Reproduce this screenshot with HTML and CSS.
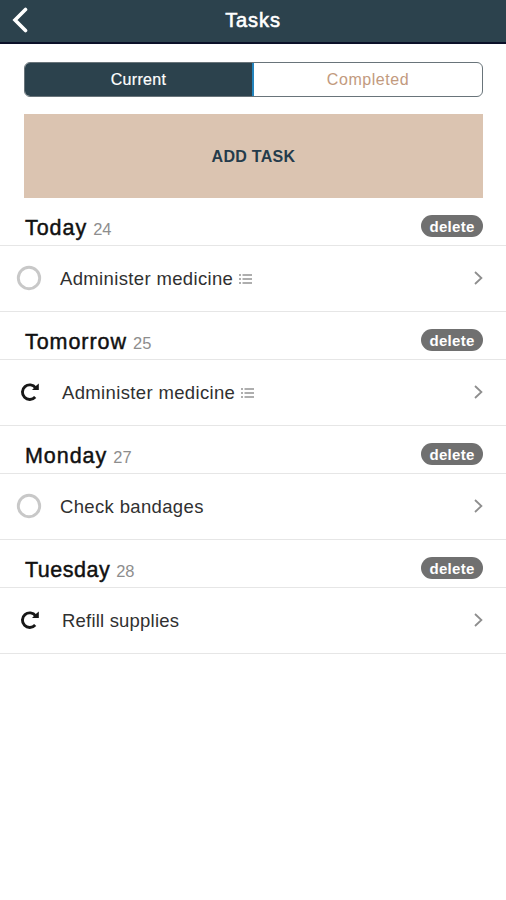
FILE: index.html
```html
<!DOCTYPE html>
<html lang="en">
<head>
<meta charset="utf-8">
<title>Tasks</title>
<link rel="stylesheet" href="styles.css">
</head>
<body>
<svg class="symbols" aria-hidden="true">
  <symbol id="chevron" viewBox="0 0 10 16"><path d="M1 2 7.4 8 1 14" fill="none" stroke="#8e8e8e" stroke-width="1.8"/></symbol>
  <symbol id="circle" viewBox="0 0 26 26"><circle cx="13" cy="13" r="10.7" fill="none" stroke="#c8c8c8" stroke-width="2.9"/></symbol>
  <symbol id="repeat" viewBox="0 0 20 20"><path d="M15.2 15A7.3 7.3 0 1 1 15.6 5.8" fill="none" stroke="#171717" stroke-width="2.9"/><path d="M12 8h6.8V1.4l-2.4 2z" fill="#171717"/></symbol>
  <symbol id="list" viewBox="0 0 13 10"><path d="M0 1h2M3.5 1H13M0 5h2M3.5 5H13M0 9h2M3.5 9H13" stroke="#949494" stroke-width="1.3"/></symbol>
</svg>
<header class="bar">
  <svg class="back" viewBox="0 0 16 26"><path d="M13.5 2.5 3 13 13.5 23.5" fill="none" stroke="#fff" stroke-width="3.6" stroke-linecap="round"/></svg>
  <h1 class="title">Tasks</h1>
</header>
<main>
  <nav class="tabs">
    <div class="tab tab-active">Current</div>
    <div class="tab">Completed</div>
  </nav>
  <button class="add">ADD TASK</button>
  <section class="day">
    <div class="day-head"><h2 class="day-name">Today</h2><span class="date">24</span><button class="delete">delete</button></div>
    <div class="task"><svg class="circle"><use href="#circle"/></svg><span class="label">Administer medicine</span><svg class="list"><use href="#list"/></svg><svg class="chevron"><use href="#chevron"/></svg></div>
  </section>
  <section class="day">
    <div class="day-head"><h2 class="day-name">Tomorrow</h2><span class="date">25</span><button class="delete">delete</button></div>
    <div class="task"><svg class="repeat"><use href="#repeat"/></svg><span class="label">Administer medicine</span><svg class="list"><use href="#list"/></svg><svg class="chevron"><use href="#chevron"/></svg></div>
  </section>
  <section class="day">
    <div class="day-head"><h2 class="day-name">Monday</h2><span class="date">27</span><button class="delete">delete</button></div>
    <div class="task"><svg class="circle"><use href="#circle"/></svg><span class="label">Check bandages</span><svg class="chevron"><use href="#chevron"/></svg></div>
  </section>
  <section class="day">
    <div class="day-head"><h2 class="day-name tuesday">Tuesday</h2><span class="date">28</span><button class="delete">delete</button></div>
    <div class="task"><svg class="repeat"><use href="#repeat"/></svg><span class="label refill">Refill supplies</span><svg class="chevron"><use href="#chevron"/></svg></div>
  </section>
</main>
</body>
</html>
```
FILE: styles.css
```css
* { box-sizing: border-box; }
body {
  margin: 0;
  min-height: 900px;
  background: #fff;
  color: #111;
  font-family: "Liberation Sans", Arial, sans-serif;
}
button { border: 0; font-family: inherit; }
svg { flex: none; }
.symbols { display: block; width: 0; height: 0; }
.bar {
  display: grid;
  grid-template-columns: 40px 1fr 40px;
  align-items: center;
  height: 44px;
  padding-bottom: 2px;
  background: #2c424d;
  border-bottom: 2px solid #0b1028;
}
.back { width: 16px; height: 26px; margin: -1px 0 0 12px; }
.title {
  margin: 0;
  color: #fff;
  font-size: 20px;
  font-weight: 400;
  letter-spacing: .9px;
  text-align: center;
  -webkit-text-stroke: .6px #fff;
}
.tabs {
  display: grid;
  grid-template-columns: 229px 1fr;
  height: 35px;
  margin: 18px 23px 0 24px;
  border: 1px solid #69747a;
  border-radius: 6px;
  overflow: hidden;
}
.tab {
  color: #c29a7e;
  font-size: 16px;
  line-height: 33px;
  letter-spacing: .55px;
  text-align: center;
}
.tab-active {
  background: #2c424d;
  border-right: 2px solid #2384bd;
  color: #fff;
  letter-spacing: .3px;
  -webkit-text-stroke: .2px #fff;
}
.add {
  display: block;
  width: 459px;
  height: 84px;
  margin: 17px 23px 0 24px;
  padding: 2px 0 0;
  background: #dbc4b1;
  color: #243b4b;
  font-size: 16px;
  font-weight: 700;
  letter-spacing: .3px;
}
.day { height: 114px; }
.day-head {
  display: flex;
  align-items: baseline;
  height: 48px;
  padding: 17px 23px 0 25px;
  border-bottom: 1px solid #e6e6e6;
}
.day-name {
  margin: 0;
  font-size: 21.5px;
  font-weight: 400;
  line-height: 26px;
  letter-spacing: .95px;
  -webkit-text-stroke: .45px #111;
}
.tuesday { letter-spacing: .5px; }
.date { margin-left: 6px; color: #8d8d8d; font-size: 16.5px; }
.delete {
  align-self: flex-start;
  width: 62px;
  height: 22px;
  margin-left: auto;
  padding: 2px 0 0;
  border-radius: 11px;
  background: #707070;
  color: #fff;
  font-size: 15px;
  font-weight: 700;
  line-height: 20px;
  letter-spacing: .3px;
}
.task {
  display: flex;
  align-items: center;
  height: 66px;
  padding: 0 22px 2px 16px;
  border-bottom: 1px solid #e6e6e6;
}
.circle { width: 26px; height: 26px; margin-right: 18px; }
.repeat { width: 20px; height: 20px; margin: 0 22px 0 4px; }
.label { padding-top: 2px; color: #303030; font-size: 18.5px; letter-spacing: .35px; }
.refill { letter-spacing: .2px; }
.list { width: 13px; height: 10px; margin: 3px 0 0 6px; }
.chevron { width: 10px; height: 16px; margin-left: auto; }
```
